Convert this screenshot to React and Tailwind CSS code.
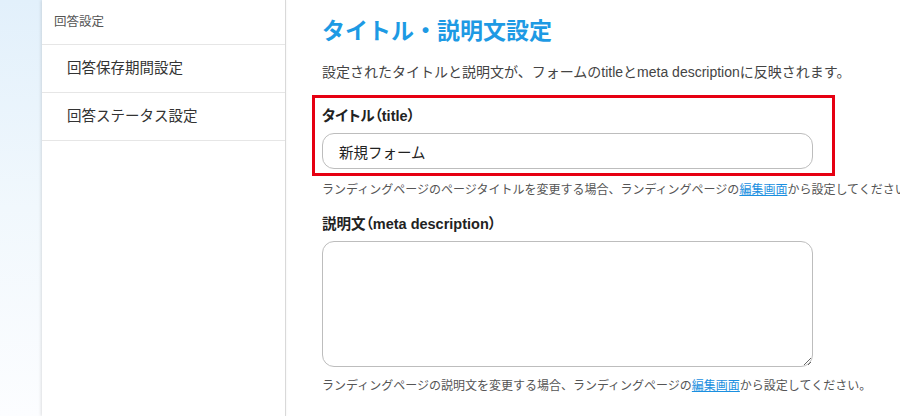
export default function App() {
  const font = "font-['Liberation_Sans','Noto_Sans_CJK_JP',sans-serif]";
  return (
    <div className={`flex h-[416px] w-[900px] overflow-hidden bg-white ${font}`}>
      <div className="w-[42px] shrink-0 bg-gradient-to-b from-[#e2f0fb] via-[#f1f8fd] to-[#fcfdff]" />
      <aside className="w-[244px] shrink-0 border-r border-[#d9d9d9] bg-white shadow-[-1px_0_3px_rgba(0,0,0,0.12)]">
        <div className="flex h-[45px] items-center border-b border-[#e6e6e6] pl-[12px] text-[12.5px] text-[#555]">
          回答設定
        </div>
        <div className="flex h-[48px] items-center border-b border-[#e6e6e6] pl-[25px] text-[14.5px] text-[#333]">
          回答保存期間設定
        </div>
        <div className="flex h-[48px] items-center border-b border-[#e6e6e6] pl-[25px] text-[14.5px] text-[#333]">
          回答ステータス設定
        </div>
      </aside>
      <main className="min-w-0 flex-1 pl-[36px] pt-[15px]">
        <h1 className="text-[23px] font-semibold leading-[32px] text-[#1d9ae4]">タイトル・説明文設定</h1>
        <p className="mt-[16px] whitespace-nowrap text-[14px] leading-[18px] text-[#444]">
          設定されたタイトルと説明文が、フォームのtitleとmeta descriptionに反映されます。
        </p>
        <div className="-ml-[10px] mt-[14px] w-[523px] border-[3px] border-[#e60012] pb-[4px] pl-[7px] pt-[9px]">
          <div className="text-[14.5px] font-bold leading-[18px] text-[#222] [font-feature-settings:'palt']">
            タイトル（title）
          </div>
          <input
            defaultValue="新規フォーム"
            className="mt-[8px] block h-[36px] w-[491px] rounded-[12px] border border-[#bdbdbd] bg-white px-[16px] text-[14.5px] text-[#222] outline-none"
          />
        </div>
        <p className="mt-[6px] whitespace-nowrap text-[12px] leading-[16px] text-[#555]">
          ランディングページのページタイトルを変更する場合、ランディングページの
          <span className="text-[#1a8fe0] underline">編集画面</span>
          から設定してください。
        </p>
        <div className="mt-[17px] text-[14.5px] font-bold leading-[18px] text-[#222] [font-feature-settings:'palt']">
          説明文（meta description）
        </div>
        <textarea className="mt-[8px] block h-[126px] w-[491px] rounded-[12px] border border-[#bdbdbd] bg-white outline-none" />
        <p className="mt-[11px] whitespace-nowrap text-[12px] leading-[16px] text-[#555]">
          ランディングページの説明文を変更する場合、ランディングページの
          <span className="text-[#1a8fe0] underline">編集画面</span>
          から設定してください。
        </p>
      </main>
    </div>
  );
}
